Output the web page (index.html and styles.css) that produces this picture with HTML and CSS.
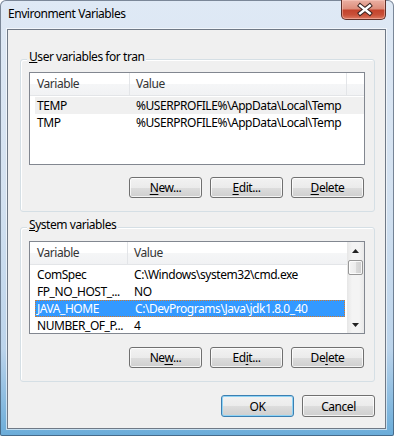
FILE: index.html
```html
<!DOCTYPE html>
<html lang="en">
<head>
    <meta charset="UTF-8">
    <title>Environment Variables</title>
    <link rel="stylesheet" href="styles.css">
</head>
<body>
    <div class="window">
        <div class="titlebar">
            <span class="title">Environment Variables</span>
            <button class="close" aria-label="Close">
                <svg width="45" height="19" viewBox="0 0 45 19">
                    <path d="M19 5.5 L29 13.5 M29 5.5 L19 13.5" stroke="#3a2320" stroke-width="4.6" stroke-linecap="square" fill="none"/>
                    <path d="M19 5.5 L29 13.5 M29 5.5 L19 13.5" stroke="#ffffff" stroke-width="2.6" stroke-linecap="square" fill="none"/>
                </svg>
            </button>
        </div>

        <div class="client">
            <div class="group group-user">
                <span class="group-label"><u>U</u>ser variables for tran</span>
                <div class="listview">
                    <div class="lv-header">
                        <div class="hcol hcol-name">Variable</div>
                        <div class="hcol hcol-value">Value</div>
                        <div class="hcol hcol-fill"></div>
                    </div>
                    <div class="lv-body">
                        <div class="row selected-dim">
                            <div class="cell cell-name">TEMP</div>
                            <div class="cell cell-value">%USERPROFILE%\AppData\Local\Temp</div>
                        </div>
                        <div class="row">
                            <div class="cell cell-name">TMP</div>
                            <div class="cell cell-value">%USERPROFILE%\AppData\Local\Temp</div>
                        </div>
                    </div>
                </div>
                <div class="btn-row">
                    <button class="btn"><u>N</u>ew...</button>
                    <button class="btn"><u>E</u>dit...</button>
                    <button class="btn"><u>D</u>elete</button>
                </div>
            </div>

            <div class="group group-system">
                <span class="group-label"><u>S</u>ystem variables</span>
                <div class="listview listview-sys">
                    <div class="lv-main">
                        <div class="lv-header">
                            <div class="hcol hcol-name">Variable</div>
                            <div class="hcol hcol-value hcol-last">Value</div>
                        </div>
                        <div class="lv-body">
                            <div class="row">
                                <div class="cell cell-name">ComSpec</div>
                                <div class="cell cell-value">C:\Windows\system32\cmd.exe</div>
                            </div>
                            <div class="row">
                                <div class="cell cell-name">FP_NO_HOST_...</div>
                                <div class="cell cell-value">NO</div>
                            </div>
                            <div class="row selected">
                                <div class="cell cell-name">JAVA_HOME</div>
                                <div class="cell cell-value">C:\DevPrograms\Java\jdk1.8.0_40</div>
                            </div>
                            <div class="row">
                                <div class="cell cell-name">NUMBER_OF_P...</div>
                                <div class="cell cell-value">4</div>
                            </div>
                        </div>
                    </div>
                    <div class="scrollbar">
                        <div class="sb-arrow">
                            <svg width="7" height="4" viewBox="0 0 7 4"><path d="M0 4 L3.5 0 L7 4 Z" fill="#222"/></svg>
                        </div>
                        <div class="sb-track">
                            <div class="sb-thumb"></div>
                        </div>
                        <div class="sb-arrow">
                            <svg width="7" height="4" viewBox="0 0 7 4"><path d="M0 0 L7 0 L3.5 4 Z" fill="#222"/></svg>
                        </div>
                    </div>
                </div>
                <div class="btn-row">
                    <button class="btn">Ne<u>w</u>...</button>
                    <button class="btn">Ed<u>i</u>t...</button>
                    <button class="btn">De<u>l</u>ete</button>
                </div>
            </div>

            <div class="dialog-buttons">
                <button class="btn btn-default">OK</button>
                <button class="btn">Cancel</button>
            </div>
        </div>
    </div>
</body>
</html>
```

FILE: styles.css
```css
body {
    margin: 0;
    background: #ffffff;
    font-family: "Noto Sans", "Open Sans", sans-serif;
    font-size: 12px;
    letter-spacing: -0.45px;
    color: #000;
}

/* window frame */
.window {
    width: 394px;
    height: 436px;
    box-sizing: border-box;
    padding: 0 8px 7px 7px;
    display: flex;
    flex-direction: column;
    border-radius: 6px 6px 2px 2px;
    background: linear-gradient(180deg, #dfe9f5 0%, #d3e1f0 45%, #bcd4eb 80%, #6aacd9 100%);
    box-shadow: inset 0 0 0 1px rgba(40, 55, 75, 0.55);
}
.titlebar {
    height: 29px;
    display: flex;
    align-items: flex-start;
}
.title {
    padding: 6px 0 0 1px;
    line-height: 16px;
    color: #000;
}
.close {
    margin-left: auto;
    width: 45px;
    height: 20px;
    padding: 0;
    border: 1px solid #5e3029;
    border-top: none;
    border-radius: 0 0 5px 5px;
    background: linear-gradient(180deg, #eab0a3 0%, #dc8c7a 48%, #c3432c 52%, #c95038 78%, #dd7a62 100%);
    box-shadow: inset 0 0 0 1px rgba(255, 210, 200, 0.45);
    display: flex;
    align-items: center;
    justify-content: center;
}
.close svg {
    display: block;
}

/* client area */
.client {
    flex: 1;
    display: flex;
    flex-direction: column;
    background: #f0f0f0;
    border: 1px solid #6f7986;
    box-shadow: 0 0 0 1px rgba(255, 255, 255, 0.6);
    padding: 0 10px 0 12px;
}

/* group boxes */
.group {
    position: relative;
    border: 1px solid #d5dfe5;
    border-radius: 3px;
    box-shadow: inset 1px 1px 0 #fff;
    padding: 12px 9px 13px 8px;
}
.group-user {
    margin-top: 29px;
}
.group-system {
    margin-top: 15px;
    padding-top: 13px;
}
.group-label {
    position: absolute;
    top: -11px;
    left: 6px;
    padding: 0 2px;
    line-height: 16px;
    background: #f0f0f0;
}

/* list views */
.listview {
    height: 93px;
    box-sizing: border-box;
    border: 1px solid #828790;
    background: #fff;
    display: flex;
    flex-direction: column;
    overflow: hidden;
}
.listview-sys {
    flex-direction: row;
}
.lv-main {
    flex: 1;
    display: flex;
    flex-direction: column;
    min-width: 0;
}
.lv-header {
    height: 22px;
    flex: none;
    display: flex;
    border-bottom: 1px solid #e3e5e8;
    background: linear-gradient(180deg, #ffffff 0%, #ffffff 50%, #f5f6f7 50%, #f1f2f4 100%);
    line-height: 22px;
    color: #333;
}
.hcol {
    box-sizing: border-box;
    padding-left: 7px;
    white-space: nowrap;
}
.hcol-name {
    width: 99px;
}
.hcol-value {
    width: 217px;
    border-left: 1px solid #e3e5e8;
    padding-left: 6px;
}
.hcol-fill {
    flex: 1;
    border-left: 1px solid #e3e5e8;
}
.hcol-last {
    flex: 1;
    width: auto;
}
.listview-sys .hcol-name {
    width: 97px;
}
.lv-body {
    padding-top: 1px;
}
.row {
    height: 17px;
    line-height: 17px;
    margin-left: 5px;
    display: flex;
    box-sizing: border-box;
    white-space: nowrap;
}
.cell {
    box-sizing: border-box;
    overflow: hidden;
}
.cell-name {
    width: 94px;
    padding-left: 2px;
}
.cell-value {
    width: 217px;
    padding-left: 7px;
}
.listview-sys .cell-name {
    width: 92px;
}
.listview-sys .cell-value {
    flex: 1;
    width: auto;
}
.selected-dim {
    background: #f0f0f0;
}
.row.selected {
    background: #3399ff;
    color: #fff;
    border: 1px dotted #d27a2c;
    margin-right: 2px;
    line-height: 15px;
}
.row.selected .cell-name {
    padding-left: 1px;
}

/* scrollbar */
.scrollbar {
    width: 17px;
    flex: none;
    display: flex;
    flex-direction: column;
    background: linear-gradient(90deg, #e6e6e6 0%, #f4f4f4 30%, #f4f4f4 70%, #e9e9e9 100%);
}
.sb-arrow {
    height: 17px;
    display: flex;
    align-items: center;
    justify-content: center;
}
.sb-track {
    flex: 1;
    padding: 1px 1px 0 1px;
}
.sb-thumb {
    height: 13px;
    border: 1px solid #979797;
    border-radius: 2px;
    background: linear-gradient(90deg, #f4f4f4 0%, #ececec 50%, #dbdbdb 51%, #cfcfcf 100%);
    box-shadow: inset 0 0 0 1px rgba(255, 255, 255, 0.8);
}

/* buttons */
.btn-row {
    display: flex;
    justify-content: flex-end;
    gap: 8px;
    margin-top: 12px;
    padding-right: 1px;
}
.group-system .btn-row {
    margin-top: 13px;
}
.btn {
    width: 73px;
    height: 21px;
    padding: 0;
    font-family: inherit;
    font-size: 12px;
    letter-spacing: inherit;
    color: #000;
    border: 1px solid #707070;
    border-radius: 3px;
    background: linear-gradient(180deg, #f2f2f2 0%, #ebebeb 50%, #dddddd 50%, #cfcfcf 100%);
    box-shadow: inset 0 0 0 1px rgba(255, 255, 255, 0.75);
}
.btn u {
    text-underline-offset: 2px;
}
.dialog-buttons {
    display: flex;
    justify-content: flex-end;
    gap: 8px;
    margin-top: 13px;
}
.dialog-buttons .btn {
    height: 22px;
}
.btn-default {
    border-color: #3c7fb1;
    box-shadow: inset 0 0 0 1px #8fd3f5;
}
```
